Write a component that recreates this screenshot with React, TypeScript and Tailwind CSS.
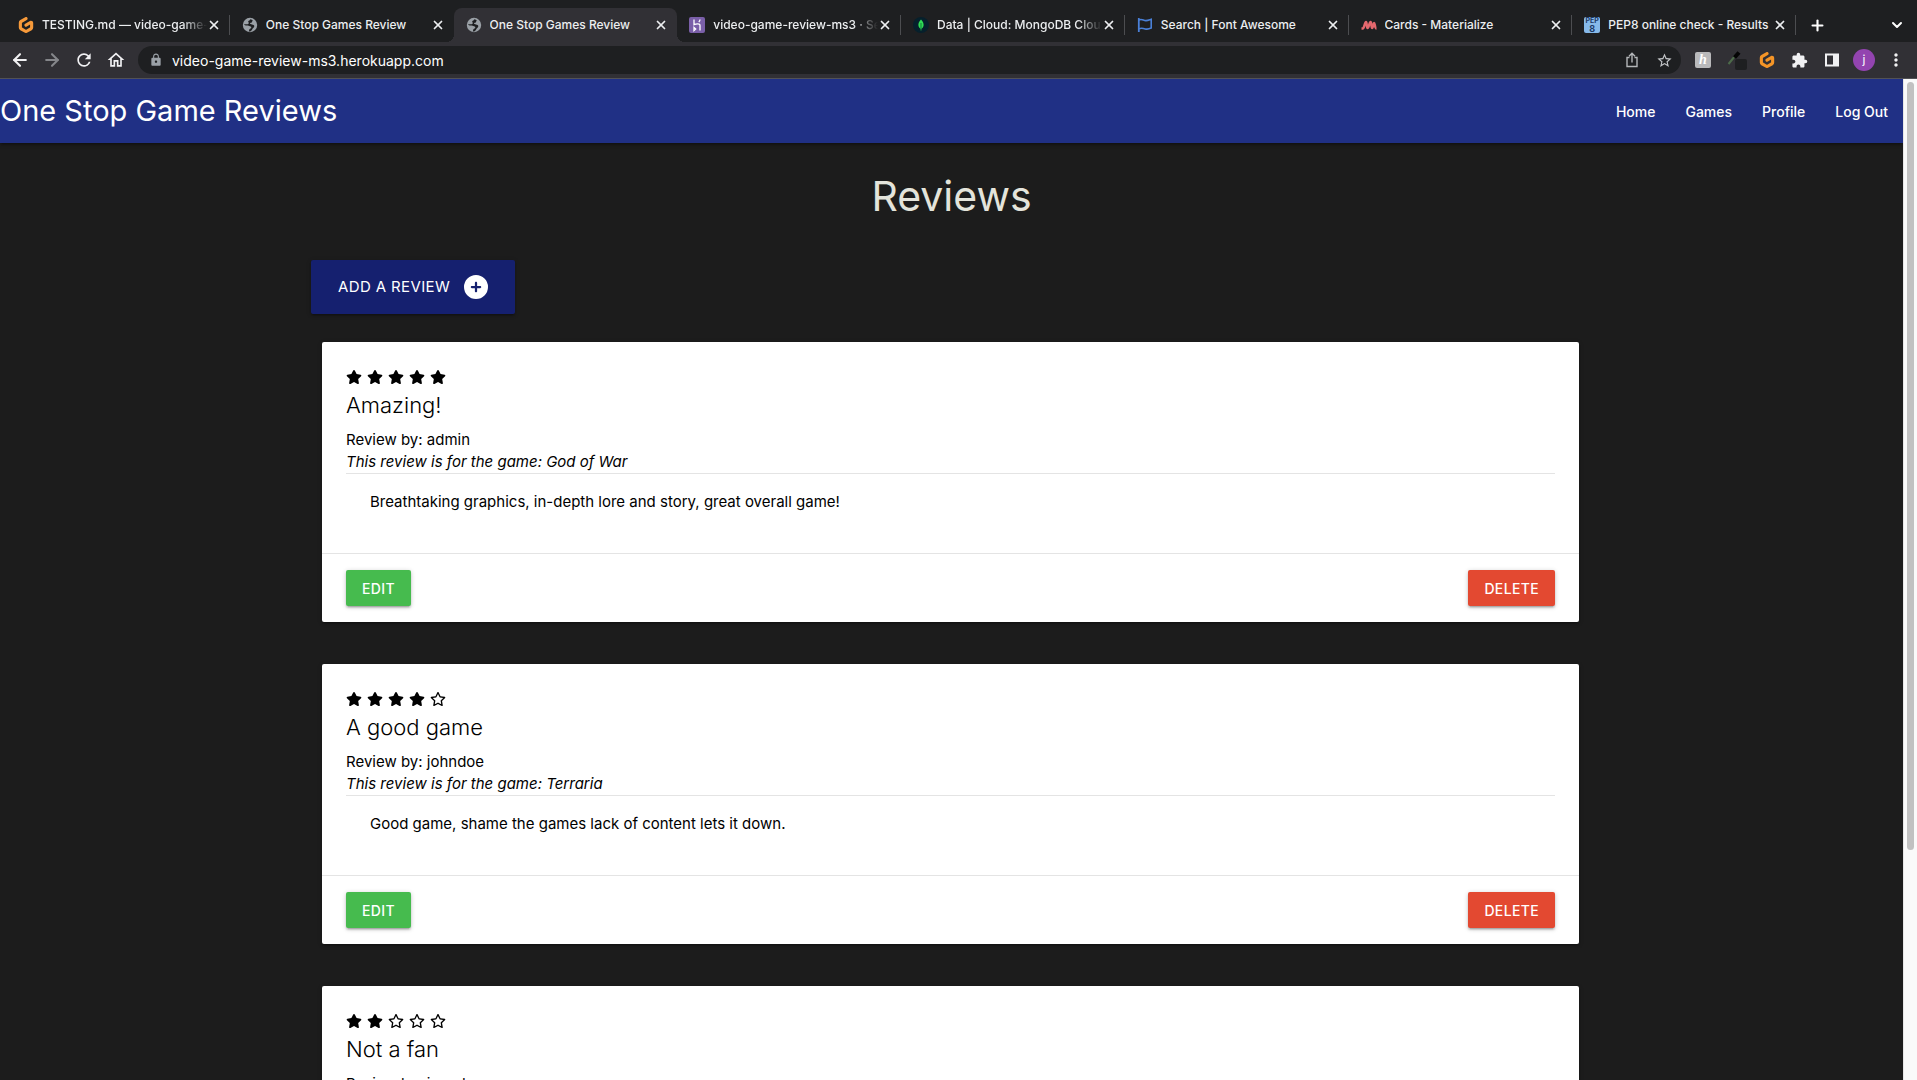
import React from "react";
import { ArrowLeft, ArrowRight, ChevronDown, Plus, X } from "lucide-react";
import { FaCirclePlus, FaRegStar, FaStar } from "react-icons/fa6";
import { MdExtension, MdLock, MdMoreVert, MdOutlineHome, MdRefresh, MdStarBorder } from "react-icons/md";
import { SiGitpod } from "react-icons/si";

function GlobeIcon() {
  return (
    <svg viewBox="0 0 16 16" className="size-4">
      <circle cx="8" cy="8" r="7.200" fill="#9aa0a6" />
      <path
        d="M8.500 2.200c-.9.5-.7 1.300-1.700 1.600-.9.300-.6 1.200-.2 1.700.6.700-.1 1.500-1 1.700-1.200.2-1.700.1-3.500-.3.200.9.600 1.300 1.700 1.500 1.300.200 2.600-.1 3.500.6.8.600 2 .4 2 1.400 0 1.200-1.600.9-2 2-.3.700-.1 1.300-.5 2.200 2.200.1 2.900-1.500 3.600-2.700.6-1 1.800-1.400 1.900-2.600.1-1.300-1.300-1.400-2.300-1.800-.9-.4-1.900-.1-2-.9-.1-.9 1.200-.7 1.900-1.400.5-.6.200-1.400 1-1.700-.700-.7-1.500-1.100-2.400-1.300z"
        fill="#1e1f21"
      />
    </svg>
  );
}

function HerokuIcon() {
  return (
    <svg viewBox="0 0 16 16" className="size-4">
      <rect width="16" height="16" rx="2" fill="#7a5fa8" />
      <path d="M5 2.500v5.200c2-.9 6-1.500 6 .7v5.100M11 2.500c0 1-.4 1.800-1.200 2.500M5 10.500v3l1.700-1.500z" fill="none" stroke="#fff" strokeWidth="1.300" />
    </svg>
  );
}

function MongoIcon() {
  return (
    <svg viewBox="0 0 16 16" className="size-4">
      <circle cx="8" cy="8" r="8" fill="#06202c" />
      <path d="M8 2.500c2 2 2.800 4 2.600 5.800C10.400 10 9.500 11.300 8.300 12v1.500h-.6V12C6.500 11.300 5.600 10 5.400 8.300 5.200 6.500 6 4.500 8 2.500z" fill="#2fdc55" />
      <path d="M8 6v7" stroke="#0a6b35" strokeWidth=".8" />
    </svg>
  );
}

function FlagIcon() {
  return (
    <svg viewBox="0 0 16 16" className="size-4" fill="none" stroke="#4a80d8" strokeWidth="1.600">
      <path d="M1.800 1v14" strokeWidth="1.800" />
      <path d="M2 3c3-1.500 4.500.8 7 .6 2-.1 3.500-.8 5.200-1.300v8.800c-2 .9-4 1.400-6 .8-2-.7-4-1.200-6.200-.2" />
    </svg>
  );
}

function MaterializeIcon() {
  return (
    <svg viewBox="0 0 16 16" className="size-4" fill="none" stroke="#e5686e" strokeWidth="2.400" strokeLinejoin="round">
      <path d="M.5 11.500h1.300c1.500 0 1.900-6.500 3.200-6.500 1.200 0 .3 6 1.600 6S8.200 5 9.600 5c1.200 0 .3 6 1.600 6 1 0 1.100-5 1.900-5 .9 0 .6 5.500 2.400 5.500" />
    </svg>
  );
}

function PepIcon() {
  return (
    <span className="flex size-4 flex-col items-center justify-center overflow-hidden rounded-xs bg-[#86b9ea] font-bold text-[#1d3a66]">
      <span className="text-[7px] leading-[7px]">PEP</span>
      <span className="text-[9px] leading-[9px]">8</span>
    </span>
  );
}

const tabs = [
  { title: "TESTING.md — video-game-", icon: <SiGitpod className="size-4 text-[#f79a3a]" />, fade: true },
  { title: "One Stop Games Review", icon: <GlobeIcon /> },
  { title: "One Stop Games Review", icon: <GlobeIcon />, active: true },
  { title: "video-game-review-ms3 · Se", icon: <HerokuIcon />, fade: true },
  { title: "Data | Cloud: MongoDB Clou", icon: <MongoIcon />, fade: true },
  { title: "Search | Font Awesome", icon: <FlagIcon /> },
  { title: "Cards - Materialize", icon: <MaterializeIcon /> },
  { title: "PEP8 online check - Results", icon: <PepIcon /> },
];

const reviews = [
  { stars: 5, title: "Amazing!", by: "admin", game: "God of War", text: "Breathtaking graphics, in-depth lore and story, great overall game!" },
  { stars: 4, title: "A good game", by: "johndoe", game: "Terraria", text: "Good game, shame the games lack of content lets it down." },
  { stars: 2, title: "Not a fan", by: "janedoe", game: "Minecraft", text: "Not the kind of game I enjoy." },
];

function TabStrip() {
  return (
    <div className="flex h-[42px] items-end bg-[#1e1f21] pl-[6px]">
      {tabs.map((tab, i) => {
        const line = !tab.active && !tabs[i + 1]?.active;
        return (
          <div
            key={i}
            className={
              "relative flex h-[34px] min-w-0 flex-1 items-center pl-3 pr-[9px] " +
              (tab.active ? "rounded-t-lg bg-[#313035]" : "")
            }
          >
            {tab.icon}
            <span
              className={
                "ml-2 min-w-0 flex-1 overflow-hidden whitespace-nowrap text-[12px] font-medium text-[#eceef0] " +
                (tab.fade ? "mask-r-from-85%" : "")
              }
            >
              {tab.title}
            </span>
            <button aria-label="Close tab" className="text-[#eceef0]">
              <X size={14} strokeWidth={3} />
            </button>
            {line && <span className="absolute right-0 top-[7px] h-5 w-px bg-[#4c4d50]" />}
            {tab.active && (
              <>
                <span className="absolute bottom-0 -left-2 size-2 bg-[radial-gradient(circle_at_0_0,#1e1f21_8px,#313035_8px)]" />
                <span className="absolute bottom-0 -right-2 size-2 bg-[radial-gradient(circle_at_100%_0,#1e1f21_8px,#313035_8px)]" />
              </>
            )}
          </div>
        );
      })}
      <div className="flex h-[34px] w-[121px] items-center justify-between pl-[13px] pr-3 text-white">
        <button aria-label="New tab">
          <Plus size={17} strokeWidth={3} />
        </button>
        <button aria-label="Search tabs">
          <ChevronDown size={16} strokeWidth={3} />
        </button>
      </div>
    </div>
  );
}

function Toolbar() {
  return (
    <div className="flex h-[37px] items-center border-b border-[#525256] bg-[#313035] pl-[10px] pr-[13px] text-[#f1f1f3]">
      <div className="flex gap-3">
        <button aria-label="Back"><ArrowLeft size={20} strokeWidth={2.5} /></button>
        <button aria-label="Forward" className="text-[#85868a]"><ArrowRight size={20} strokeWidth={2.5} /></button>
        <button aria-label="Reload"><MdRefresh size={20} /></button>
        <button aria-label="Home"><MdOutlineHome size={20} /></button>
      </div>
      <label className="ml-3 flex h-7 flex-1 items-center rounded-full bg-[#1e1f21] pl-[11px] pr-2">
        <MdLock size={14} className="text-[#9aa0a6]" />
        <input
          aria-label="Address"
          defaultValue="video-game-review-ms3.herokuapp.com"
          className="ml-[9px] min-w-0 flex-1 bg-transparent text-[14px] text-white outline-none"
        />
        <svg viewBox="0 0 16 16" className="mr-4 size-4" fill="none" stroke="#b4b6b9" strokeWidth="1.400">
          <path d="M5.500 5.500H3v9h10v-9h-2.500M8 10.500V1.500M5 4.300l3-3 3 3" />
        </svg>
        <MdStarBorder size={17} className="text-[#c4c6c9]" />
      </label>
      <div className="ml-[14px] flex items-center gap-4">
        <span className="flex size-4 items-center justify-center rounded-xs bg-[#b9b9bb] font-['Liberation_Serif',serif] text-[14px] font-bold italic leading-4 text-white">h</span>
        <svg viewBox="0 0 20 20" className="-mr-1 size-5">
          <path d="M1.500 14 8 6" stroke="#4d6b4a" strokeWidth="2" />
          <path d="M7.500 7.500l4.500-5" stroke="#050505" strokeWidth="4" />
          <rect x="8" y="9" width="12" height="11" rx="2" fill="#1e1f21" />
        </svg>
        <SiGitpod size={16} className="text-[#f59527]" />
        <MdExtension size={17} />
        <svg viewBox="0 0 16 16" className="size-4">
          <path d="M1 1.500h14v13H1zM3 3.500v9h6v-9z" fill="#f1f1f3" fillRule="evenodd" />
        </svg>
        <span className="-mx-[3px] flex size-[22px] items-center justify-center rounded-full bg-[#9344b0] text-[12px] text-white">j</span>
        <button aria-label="Menu" className="-mx-[2px]"><MdMoreVert size={20} /></button>
      </div>
    </div>
  );
}

const shadow = "shadow-[0_2px_2px_0_rgba(0,0,0,0.14),0_3px_1px_-2px_rgba(0,0,0,0.12),0_1px_5px_0_rgba(0,0,0,0.2)]";

function ReviewCard({ review }: { review: (typeof reviews)[number] }) {
  return (
    <article className={"rounded-[2px] bg-white text-black " + shadow}>
      <div className="p-6">
        <div className="flex h-[22px] items-center gap-[5px]" aria-label={review.stars + " out of 5 stars"}>
          {[1, 2, 3, 4, 5].map((n) =>
            n <= review.stars ? <FaStar key={n} size={16} /> : <FaRegStar key={n} size={16} />
          )}
        </div>
        <h2 className="mb-[6px] text-[22px] font-light leading-[35px]">{review.title}</h2>
        <p className="text-[15px] leading-[22px]">Review by: {review.by}</p>
        <p className="text-[15px] italic leading-[22px]">This review is for the game: {review.game}</p>
        <div className="h-14 border-t border-[#e4e4e4] px-6 pt-[17px]">
          <p className="text-[15px] leading-[22px]">{review.text}</p>
        </div>
      </div>
      <div className="flex justify-between border-t border-[#e4e4e4] px-6 py-4">
        <button className={"h-9 rounded-[2px] bg-[#46bb4e] px-4 text-[14px] font-medium tracking-wide text-white " + shadow}>EDIT</button>
        <button className={"h-9 rounded-[2px] bg-[#e34931] px-4 text-[14px] font-medium tracking-wide text-white " + shadow}>DELETE</button>
      </div>
    </article>
  );
}

export default function App() {
  return (
    <div className="flex h-screen flex-col overflow-hidden bg-[#1c1c1c] font-['Inter','Liberation_Sans',sans-serif]">
      <header>
        <TabStrip />
        <Toolbar />
      </header>
      <div className="flex min-h-0 flex-1">
        <div className="min-w-0 flex-1 overflow-hidden">
          <nav className={"flex h-16 items-center justify-between bg-[#203085] text-white " + shadow}>
            <a href="#" className="whitespace-nowrap text-[29px]">One Stop Game Reviews</a>
            <div className="flex text-[14px] font-medium">
              {["Home", "Games", "Profile", "Log Out"].map((item) => (
                <a key={item} href="#" className="px-[15px]">{item}</a>
              ))}
            </div>
          </nav>
          <main>
            <h1 className="mt-[29px] text-center text-[41px] leading-[48px] text-[#e4e4db]">Reviews</h1>
            <button className={"ml-[311px] mt-10 flex h-[54px] items-center gap-[14px] rounded-[2px] bg-[#15206f] px-[27px] text-[15px] tracking-wide text-white " + shadow}>
              ADD A REVIEW
              <FaCirclePlus size={24} />
            </button>
            <div className="mt-7 flex flex-col gap-[42px] pl-[322px] pr-[324px]">
              {reviews.map((r) => <ReviewCard key={r.title} review={r} />)}
            </div>
          </main>
        </div>
        <div className="w-[14px] border-l border-[#e6e6e6] bg-[#fafafa] px-[3px] pt-[3px]">
          <div className="h-[77%] rounded-full bg-[#c1c1c1]" />
        </div>
      </div>
    </div>
  );
}
